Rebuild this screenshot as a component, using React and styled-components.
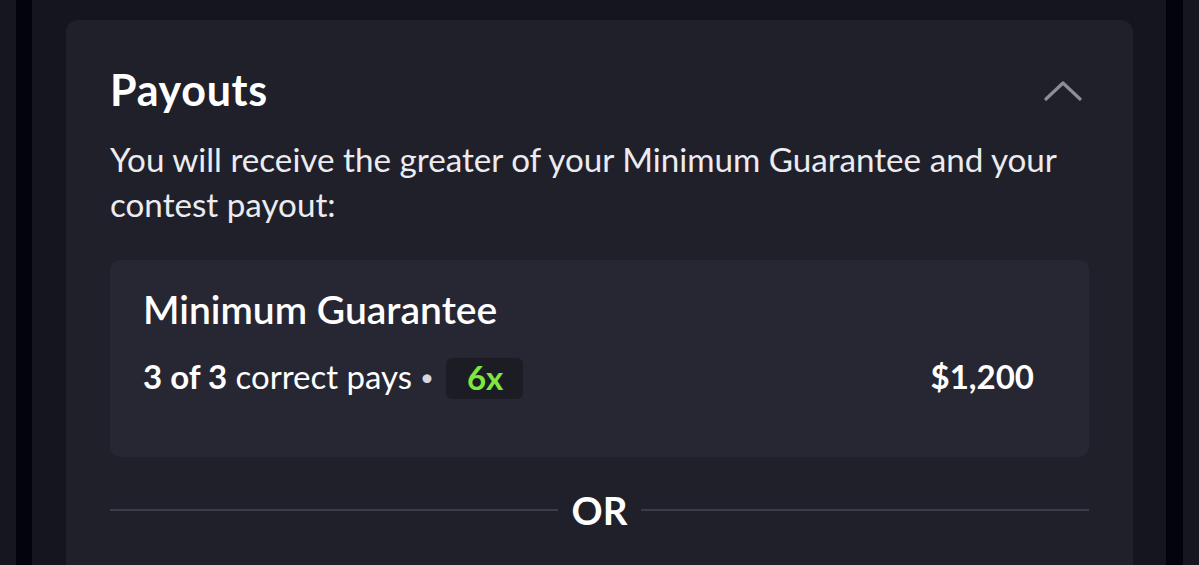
import React from "react";
import styled, { createGlobalStyle } from "styled-components";

const Global = createGlobalStyle`
  html, body { margin: 0; padding: 0; background: #15151f; }
  body { font-family: "Lato", "Noto Sans", sans-serif; -webkit-font-smoothing: antialiased; }
`;

const Page = styled.div`
  display: grid;
  grid-template-columns: 16px 16px 34px 1fr 33px 17px 16px;
  height: 565px;
  overflow: hidden;
  background: #15151f;
`;

const Strip = styled.div`
  background: ${(p) => p.$c};
`;

const Main = styled.div`
  padding-top: 20px;
`;

const Card = styled.section`
  background: #20202b;
  border-radius: 12px;
  padding: 44px 44px 60px 44px;
  height: 600px;
`;

const Header = styled.div`
  display: flex;
  align-items: center;
  justify-content: space-between;
`;

const Title = styled.h2`
  margin: 0;
  color: #ffffff;
  font-size: 43px;
  line-height: 1.2;
  font-weight: 700;
  letter-spacing: 0.7px;
`;

const Chevron = styled.svg`
  width: 38px;
  height: 22px;
  margin: 2px 7px 0 0;
`;

const Desc = styled.p`
  margin: 21px 0 33px 0;
  color: #ececf0;
  font-size: 33.2px;
  line-height: 45px;
  font-weight: 400;
`;

const Box = styled.div`
  background: #272733;
  border-radius: 10px;
  padding: 26px 55px 58px 33px;
`;

const BoxTitle = styled.div`
  color: #ffffff;
  font-size: 39px;
  line-height: 1.2;
  font-weight: 600;
  margin-bottom: 26px;
`;

const Row = styled.div`
  display: flex;
  align-items: center;
  justify-content: space-between;
  height: 41px;
  color: #ffffff;
  font-size: 33px;
  line-height: 36px;
`;

const Left = styled.div`
  display: flex;
  align-items: center;
  gap: 8px;
`;

const Text = styled.span`
  padding-bottom: 5px;
`;

const Bold = styled.b`
  font-weight: 700;
`;

const Dot = styled.span`
  font-size: 24px;
  color: #d8d8dc;
  padding-bottom: 4px;
`;

const Pill = styled.span`
  display: inline-flex;
  align-items: center;
  height: 41px;
  box-sizing: border-box;
  background: #1c1c25;
  color: #7ee83f;
  font-weight: 700;
  border-radius: 6px;
  padding: 0 20px 3px 21px;
  margin-left: 4px;
`;

const Amount = styled.span`
  font-weight: 700;
  font-size: 33px;
  padding-bottom: 5px;
`;

const OrRow = styled.div`
  display: flex;
  align-items: center;
  gap: 14px;
  margin-top: 30px;
`;

const Line = styled.div`
  flex: 1;
  height: 2px;
  background: #3c3c48;
`;

const OrText = styled.span`
  color: #ffffff;
  font-size: 38.5px;
  line-height: 46px;
  font-weight: 700;
`;

export default function App() {
  return (
    <>
      <Global />
      <Page>
        <Strip $c="#161620" />
        <Strip $c="#03030d" />
        <Strip $c="#15151f" />
        <Main>
          <Card>
            <Header>
              <Title>Payouts</Title>
              <Chevron viewBox="0 0 38 22">
                <path d="M2 19 L19 3 L36 19" fill="none" stroke="#8d8d93" strokeWidth="3.2" strokeLinecap="round" strokeLinejoin="round" />
              </Chevron>
            </Header>
            <Desc>
              You will receive the greater of your Minimum Guarantee and your contest payout:
            </Desc>
            <Box>
              <BoxTitle>Minimum Guarantee</BoxTitle>
              <Row>
                <Left>
                  <Text>
                    <Bold>3 of 3</Bold> correct pays
                  </Text>
                  <Dot>•</Dot>
                  <Pill>6x</Pill>
                </Left>
                <Amount>$1,200</Amount>
              </Row>
            </Box>
            <OrRow>
              <Line />
              <OrText>OR</OrText>
              <Line />
            </OrRow>
          </Card>
        </Main>
        <Strip $c="#15151f" />
        <Strip $c="#03030d" />
        <Strip $c="#161620" />
      </Page>
    </>
  );
}
